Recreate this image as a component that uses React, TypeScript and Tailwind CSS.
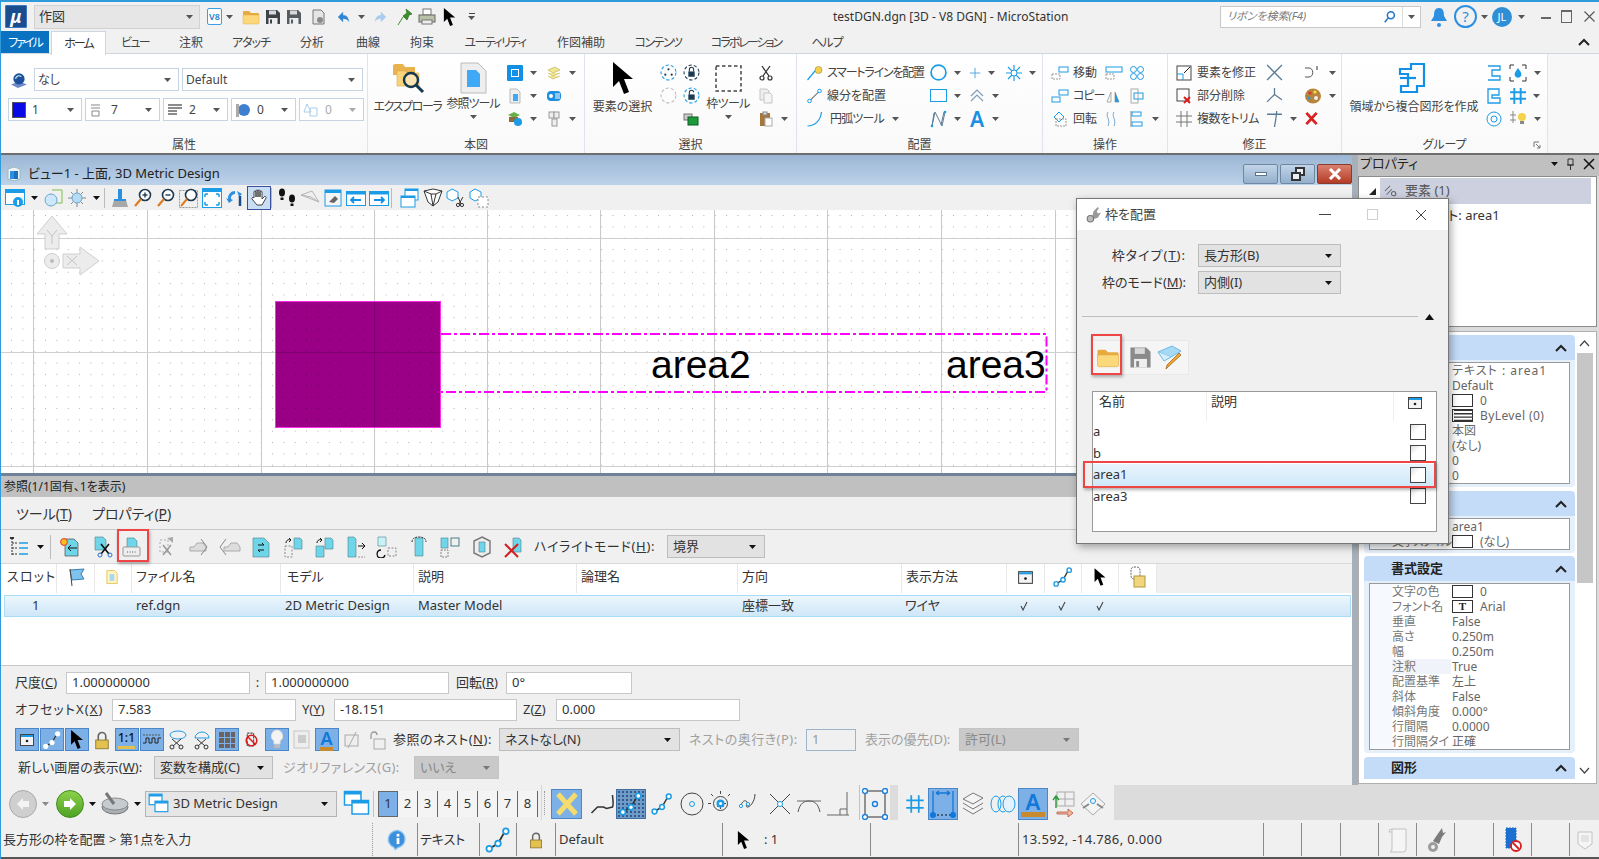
import React from "react";

const BL = "#1c9ce6";

function Ico({ w = 16, h = 16, vb = "0 0 16 16", children }: { w?: number; h?: number; vb?: string; children?: React.ReactNode }) {
  return (
    <svg width={w} height={h} viewBox={vb} fill="none" className="shrink-0">
      {children}
    </svg>
  );
}

const Caret = ({ c = "#555" }: { c?: string }) => (
  <svg width="7" height="4" viewBox="0 0 7 4" className="shrink-0">
    <path d="M0 0h7L3.5 4z" fill={c} />
  </svg>
);
const Cursor = ({ w = 12, h = 18 }: { w?: number; h?: number }) => (
  <Ico w={w} h={h} vb="0 0 22 32">
    <path d="M1 0v25l6-6 5 13 5-2-5-13h9z" fill="#000" />
  </Ico>
);
const Folder = ({ w = 18, h = 16 }: { w?: number; h?: number }) => (
  <Ico w={w} h={h} vb="0 0 18 16">
    <path d="M1 3a1 1 0 0 1 1-1h5l2 2h7a1 1 0 0 1 1 1v3H1z" fill="#e8a93f" />
    <path d="M1 6h16v8a1 1 0 0 1-1 1H2a1 1 0 0 1-1-1z" fill="#fbd879" stroke="#e2ac4c" strokeWidth=".5" />
  </Ico>
);
const Save = ({ c = "#3d4347", s = 16 }: { c?: string; s?: number }) => (
  <Ico w={s} h={s}>
    <path d="M1 1h11l3 3v11H1z" fill={c} />
    <rect x="4" y="1.5" width="7" height="4" fill="#d8d8d8" />
    <rect x="3.5" y="9" width="9" height="6" fill="#eee" />
    <rect x="5" y="10.5" width="2" height="4" fill={c} />
  </Ico>
);
const Scissors = ({ c = "#333", s = 16, hc = "#333" }: { c?: string; s?: number; hc?: string }) => (
  <Ico w={s} h={s}>
    <path d="M4 1l7 10M12 1L5 11" stroke={c} strokeWidth="1.3" />
    <circle cx="4" cy="13" r="2" stroke={hc} strokeWidth="1.2" />
    <circle cx="12" cy="13" r="2" stroke={hc} strokeWidth="1.2" />
  </Ico>
);
const Chev = () => (
  <svg width="12" height="8" viewBox="0 0 12 8" className="shrink-0">
    <path d="M1 7l5-5 5 5" stroke="#222" strokeWidth="2" fill="none" />
  </svg>
);
const Lock = ({ s = 16, d = false }: { s?: number; d?: boolean }) => (
  <Ico w={s} h={s}>
    <path d="M5 8V5a3 3 0 0 1 6 0v3" stroke={d ? "#aaa" : "#666"} strokeWidth="1.3" />
    <rect x="3" y="8" width="10" height="7" fill={d ? "#eee" : "#e3c14f"} stroke={d ? "#aaa" : "#8a7430"} strokeWidth=".7" />
  </Ico>
);
const PathIcon = ({ s = 16, c = BL }: { s?: number; c?: string }) => (
  <Ico w={s} h={s}>
    <path d="M3 13l5-3 4-7" stroke="#333" strokeWidth="1" />
    <circle cx="3" cy="13" r="1.6" fill="#fff" stroke={c} />
    <circle cx="8" cy="10" r="1.6" fill="#fff" stroke={c} />
    <circle cx="12.5" cy="3" r="1.6" fill="#fff" stroke={c} />
  </Ico>
);
const ViewWin = ({ s = 16 }: { s?: number }) => (
  <Ico w={s} h={s}>
    <rect x="1.5" y="2.5" width="13" height="11" fill="#f4f4f4" stroke="#444" />
    <rect x="2" y="3" width="12" height="2" fill={BL} />
    <circle cx="8" cy="9" r="1.3" fill="#222" />
  </Ico>
);
const Win2 = ({ s = 18 }: { s?: number }) => (
  <Ico w={s} h={s} vb="0 0 18 18">
    <rect x="1" y="1" width="11" height="9" fill="#fff" stroke={BL} />
    <rect x="1" y="1" width="11" height="2" fill={BL} />
    <rect x="6" y="7" width="11" height="9" fill="#fff" stroke={BL} />
    <rect x="6" y="7" width="11" height="2" fill={BL} />
  </Ico>
);
const Line = ({ d, c = BL, s = 16, sw = 1.2 }: { d: string; c?: string; s?: number; sw?: number }) => (
  <Ico w={s} h={s}>
    <path d={d} stroke={c} strokeWidth={sw} />
  </Ico>
);
const InfoBubble = ({ s = 16 }: { s?: number }) => (
  <Ico w={s} h={s}>
    <path d="M8 1a7 6.5 0 0 0-3 12.4L6 15l2-1.5A7 6.5 0 0 0 8 1z" fill="#3c8fdc" stroke="#8cc4f2" />
    <rect x="7" y="6.5" width="2" height="4.5" fill="#fff" />
    <rect x="7" y="3.5" width="2" height="2" fill="#fff" />
  </Ico>
);
const MagGlass = ({ sign, s = 20 }: { sign?: "+" | "-"; s?: number }) => (
  <Ico w={s} h={s} vb="0 0 20 20">
    <circle cx="12" cy="7" r="5.5" fill="#fff" stroke="#1c3b52" strokeWidth="1.6" />
    <path d="M8 11l-6 7" stroke="#e27a1f" strokeWidth="2.2" />
    {sign && <path d="M9.5 7h5" stroke="#1c3b52" strokeWidth="1.4" />}
    {sign === "+" && <path d="M12 4.5v5" stroke="#1c3b52" strokeWidth="1.4" />}
  </Ico>
);
const DashSquare = ({ s = 27 }: { s?: number }) => (
  <Ico w={s} h={s} vb="0 0 27 27">
    <rect x="1" y="1" width="25" height="25" stroke="#444" strokeWidth="1.5" strokeDasharray="3.5 2.5" />
  </Ico>
);
const RedX = ({ s = 15 }: { s?: number }) => (
  <Ico w={s} h={s}>
    <path d="M2.5 2l11 12M13.5 2l-11 12" stroke="#dc2020" strokeWidth="3" />
  </Ico>
);

function Cell({ className = "", children }: { className?: string; children?: React.ReactNode }) {
  return <div className={"flex items-center whitespace-nowrap " + className}>{children}</div>;
}

function Tool({ icon, caret }: { icon: React.ReactNode; caret?: boolean }) {
  return (
    <div className="flex items-center gap-[7px] h-[23px]">
      {icon}
      {caret && <Caret />}
    </div>
  );
}

function Group({ label, className, launcher, children }: { label: string; className: string; launcher?: boolean; children?: React.ReactNode }) {
  return (
    <div className={"relative flex flex-col border-r border-[#dfe4ea] " + className}>
      <div className="flex-1 pt-[7px]">{children}</div>
      <div className="h-[18px] leading-[20px] text-center text-[12px] text-[#444]">{label}</div>
      {launcher && (
        <div className="absolute right-[6px] bottom-[4px]">
          <Ico w={8} h={8} vb="0 0 8 8">
            <path d="M1 1h5M1 1v5M3 3l4 4M7 4v3H4" stroke="#777" />
          </Ico>
        </div>
      )}
    </div>
  );
}

function BigBtn({ icon, label, caret, className = "", textClass = "" }: { icon: React.ReactNode; label: string; caret?: boolean; className?: string; textClass?: string }) {
  return (
    <div className={"flex flex-col items-center " + className}>
      <div className="mt-[1px] h-[32px] flex items-center">{icon}</div>
      <div className={"leading-[16px] whitespace-nowrap " + (caret ? "mt-[2px] " : "mt-[5px] ") + textClass}>{label}</div>
      {caret && (
        <div className="mt-[3px]">
          <Caret />
        </div>
      )}
    </div>
  );
}

function RCombo({ w, children, disabled }: { w: string; children?: React.ReactNode; disabled?: boolean }) {
  return (
    <div className={"flex items-center justify-between h-[23px] bg-white border border-[#c5d3e3] px-[3px] " + w + (disabled ? " text-[#aaa]" : "")}>
      <div className="flex items-center gap-[6px] whitespace-nowrap">{children}</div>
      <div className="mr-[4px]">
        <Caret c={disabled ? "#aaa" : "#555"} />
      </div>
    </div>
  );
}

function TitleBar() {
  return (
    <div className="flex items-center h-[31px] bg-[#f1f1f1] border-t-2 border-[#2f9bdc]">
      <div className="ml-[4px] w-[22px] h-[23px] bg-[#1b4c8d] border border-[#3d78c4] rounded-[1px] text-white italic font-bold text-[18px] leading-[20px] text-center">μ</div>
      <div className="ml-[7px] w-[166px] h-[24px] bg-[#e6e6e6] border border-[#d2d2d2] flex items-center justify-between px-[4px] text-[13px]">
        作図
        <div className="mr-[2px]"><Caret /></div>
      </div>
      <div className="ml-[7px] w-[15px] h-[17px] border border-[#39a0e6] rounded-[2px] text-[9px] leading-[15px] text-center text-[#1c7fcb] bg-white font-semibold">V8</div>
      <div className="ml-[4px]"><Caret /></div>
      <div className="ml-[9px]"><Folder /></div>
      <div className="ml-[5px]"><Save /></div>
      <div className="ml-[5px]"><Save c="#565c60" /></div>
      <div className="ml-[8px]">
        <Ico>
          <path d="M3 1h8l3 3v11H3z" fill="#e5e5e5" stroke="#777" />
          <circle cx="10" cy="11" r="3" fill="#8a8a8a" />
        </Ico>
      </div>
      <div className="ml-[11px]">
        <Ico w={14} h={14}>
          <path d="M7 2L1 8l6 6v-4c3 0 5 1 7 4-1-6-3-8-7-8z" fill="#2f86d2" />
        </Ico>
      </div>
      <div className="ml-[7px]"><Caret /></div>
      <div className="ml-[8px]">
        <Ico w={14} h={14}>
          <path d="M9 2l6 6-6 6v-4c-3 0-5 1-7 4 1-6 3-8 7-8z" fill="#a9cdee" />
        </Ico>
      </div>
      <div className="ml-[10px]">
        <Ico w={16} h={18} vb="0 0 16 18">
          <path d="M9 1l6 5-3 1-2 5-4-4 4-3zM6 9l-5 8" fill="#3d8b2e" stroke="#3d8b2e" />
        </Ico>
      </div>
      <div className="ml-[5px]">
        <Ico w={18} h={18} vb="0 0 18 18">
          <rect x="5" y="1" width="8" height="6" fill="#fff" stroke="#777" />
          <rect x="1" y="7" width="16" height="7" fill="#b8c2a8" stroke="#666" />
          <rect x="4" y="12" width="10" height="4" fill="#eee" stroke="#777" />
        </Ico>
      </div>
      <div className="ml-[7px]"><Cursor w={13} h={18} /></div>
      <div className="ml-[12px] flex flex-col items-center gap-[2px]">
        <div className="w-[6px] h-[1px] bg-[#444]" />
        <Caret />
      </div>
      <div className="ml-[358px] w-[240px] text-[12px] text-[#333] whitespace-nowrap">testDGN.dgn [3D - V8 DGN] - MicroStation</div>
      <div className="ml-[147px] w-[201px] h-[22px] bg-white border border-[#c9c9c9] flex items-center text-[11px] italic text-[#7a7a7a]">
        <div className="flex-1 pl-[6px]">リボンを検索(F4)</div>
        <div className="w-[26px] flex justify-center border-r border-[#ddd] h-full items-center">
          <Ico w={14} h={14}>
            <circle cx="9" cy="6" r="4" stroke="#2077c9" strokeWidth="1.8" />
            <path d="M6 9l-4 5" stroke="#2077c9" strokeWidth="1.8" />
          </Ico>
        </div>
        <div className="w-[17px] flex justify-center"><Caret /></div>
      </div>
      <div className="ml-[8px]">
        <Ico w={20} h={22} vb="0 0 20 22">
          <path d="M10 2c-4 0-5 3-5 8l-3 5h16l-3-5c0-5-1-8-5-8z" fill="#2d8fe0" />
          <circle cx="10" cy="19" r="2" fill="#2d8fe0" />
        </Ico>
      </div>
      <div className="ml-[5px] w-[23px] h-[23px] rounded-full border-2 border-[#2d8fe0] text-[#2d8fe0] text-[15px] leading-[19px] text-center">?</div>
      <div className="ml-[4px]"><Caret /></div>
      <div className="ml-[4px] w-[20px] h-[20px] rounded-full bg-[#2e8fd6] text-white text-[11px] leading-[20px] text-center">JL</div>
      <div className="ml-[6px]"><Caret /></div>
      <div className="ml-[16px] w-[10px] h-[2px] bg-[#666] mt-[3px]" />
      <div className="ml-[10px] w-[11px] h-[13px] border border-[#666] border-t-2" />
      <div className="ml-[12px]">
        <Ico w={11} h={11} vb="0 0 11 11">
          <path d="M.5.5l10 10M10.5.5l-10 10" stroke="#555" strokeWidth="1.1" />
        </Ico>
      </div>
    </div>
  );
}

const tabs = [
  { t: "ビュー", c: "w-[58px] tracking-[-1.7px]" },
  { t: "注釈", c: "w-[54px]" },
  { t: "アタッチ", c: "w-[66px] tracking-[-1px]" },
  { t: "分析", c: "w-[56px]" },
  { t: "曲線", c: "w-[56px]" },
  { t: "拘束", c: "w-[52px]" },
  { t: "ユーティリティ", c: "w-[94px] tracking-[-1.6px]" },
  { t: "作図補助", c: "w-[78px]" },
  { t: "コンテンツ", c: "w-[76px] tracking-[-1.6px]" },
  { t: "コラボレーション", c: "w-[100px] tracking-[-2px]" },
  { t: "ヘルプ", c: "w-[62px] tracking-[-1px]" },
];

function TabBar() {
  return (
    <div className="flex items-stretch h-[23px] bg-[#f1f1f1] border-b border-[#cdd6e1]">
      <div className="w-[48px] bg-[#0b72c2] text-white text-center leading-[24px] text-[12px] tracking-[-2px]">ファイル</div>
      <div className="ml-[2px] w-[55px] h-[24px] bg-white border border-b-0 border-[#cdd6e1] text-center leading-[23px] text-[12px] tracking-[-2px]">ホーム</div>
      {tabs.map((tab) => (
        <div key={tab.t} className={tab.c + " text-center leading-[24px] text-[12px] text-[#444] whitespace-nowrap"}>
          {tab.t}
        </div>
      ))}
      <div className="ml-auto mr-[9px] self-center">
        <Chev />
      </div>
    </div>
  );
}

function Ribbon() {
  return (
    <div className="flex h-[101px] bg-gradient-to-b from-white to-[#f9f9f9] border-b-2 border-[#6e6e6e] text-[12px] text-[#444]">
      <Group label="属性" className="w-[367px]">
        <div className="mt-[7px] flex items-center gap-[3px] pl-[9px]">
          <div className="w-[21px]">
            <Ico w={18} h={18}>
              <path d="M1 12l6 3 8-3-7-3z" fill="#6c89c9" />
              <circle cx="8" cy="7" r="5" fill="#1e4f9c" />
              <path d="M5 7a3 3 0 0 1 5-2" stroke="#cfe" />
            </Ico>
          </div>
          <RCombo w="w-[145px]">なし</RCombo>
          <RCombo w="w-[181px]">Default</RCombo>
        </div>
        <div className="mt-[7px] flex items-center gap-[3px] pl-[7px]">
          <RCombo w="w-[74px]">
            <div className="w-[14px] h-[16px] bg-[#0a0ae6] border border-[#555]" />1
          </RCombo>
          <RCombo w="w-[75px]">
            <Ico>
              <path d="M2 3h9M2 6h9M3 9h7v5H3z" stroke="#888" />
            </Ico>
            7
          </RCombo>
          <RCombo w="w-[65px]">
            <Ico>
              <path d="M1 3h14M1 6h14M1 9h9M1 12h9" stroke="#666" strokeWidth="1.3" />
            </Ico>
            2
          </RCombo>
          <RCombo w="w-[65px]">
            <Ico>
              <circle cx="9" cy="8" r="6" fill="#3f7fd0" />
              <rect x="1" y="2" width="3" height="13" fill="#aaa" />
            </Ico>
            0
          </RCombo>
          <RCombo w="w-[65px]" disabled>
            <Ico>
              <path d="M4 2l4 8H1zM7 6h7v8H7z" stroke="#a9cdea" />
            </Ico>
            0
          </RCombo>
        </div>
      </Group>
      <Group label="本図" className="w-[217px]">
        <div className="flex">
          <BigBtn
            className="w-[80px]"
            textClass="tracking-[-1.4px]"
            label="エクスプローラ"
            icon={
              <Ico w={34} h={32} vb="0 0 34 32">
                <path d="M2 4a2 2 0 0 1 2-2h8l2 3h10v8H2z" fill="#eab24d" />
                <path d="M6 9h8l2 2h12v13H6z" fill="#f9d27c" stroke="#e0ab4c" strokeWidth=".6" />
                <circle cx="20" cy="18" r="7" fill="#fff" fillOpacity=".4" stroke="#14394f" strokeWidth="2.4" />
                <path d="M25 23l7 7" stroke="#14394f" strokeWidth="3" />
              </Ico>
            }
          />
          <BigBtn
            className="w-[52px]"
            textClass="tracking-[-1px]"
            label="参照ツール"
            caret
            icon={
              <Ico w={27} h={32} vb="0 0 27 32">
                <path d="M1 1h17l8 8v22H1z" fill="#eeeeee" stroke="#bbb" />
                <path d="M7 8h9l4 4v13H7z" fill="#3fa9f5" />
              </Ico>
            }
          />
          <div className="ml-[8px] grid grid-cols-[39px_38px] grid-rows-[23px_23px_23px]">
            <Tool caret icon={<div className="w-[16px] h-[16px] bg-[#1190e6] rounded-[1px] flex items-center justify-center"><div className="w-[8px] h-[8px] border border-white" /></div>} />
            <Tool caret icon={<Ico><path d="M2 5l7-3 5 3-7 3zM2 8l5 3 7-3M2 11l5 3 7-3" fill="#f2e68f" stroke="#b9a84f" strokeWidth=".6" /></Ico>} />
            <Tool caret icon={<Ico><path d="M3 1h7l3 3v11H3z" fill="#eee" stroke="#bbb" /><rect x="6" y="6" width="5" height="7" fill="#3fa9f5" /></Ico>} />
            <Tool icon={<Ico><rect x="1" y="3" width="14" height="10" rx="4" fill="#1c8fe0" /><circle cx="5" cy="8" r="2" fill="#fff" /><path d="M9 6h5M9 8h5M9 10h5" stroke="#fff" /></Ico>} />
            <Tool caret icon={<Ico><path d="M1 4l6-3 6 3-6 3z" fill="#69b04a" /><rect x="2" y="6" width="9" height="5" fill="#8a6d3b" /><circle cx="11" cy="11" r="4" fill={BL} /></Ico>} />
            <Tool caret icon={<Ico><rect x="3" y="1" width="5" height="6" fill="#eee" stroke="#999" /><rect x="8" y="1" width="5" height="6" fill="#eee" stroke="#999" /><rect x="6" y="8" width="5" height="7" fill="#eee" stroke="#999" /></Ico>} />
          </div>
        </div>
      </Group>
      <Group label="選択" className="w-[212px]">
        <div className="flex">
          <BigBtn className="w-[75px]" label="要素の選択" icon={<Cursor w={22} h={32} />} />
          <div className="grid grid-cols-[23px_21px] grid-rows-[23px_23px_23px]">
            <Tool icon={<Ico w={17} h={17}><circle cx="8" cy="8" r="7" stroke={BL} strokeDasharray="3 2" /><circle cx="8" cy="5" r="1" fill="#1c3b52" /><circle cx="5" cy="10" r="1" fill="#1c3b52" /><circle cx="11" cy="10" r="1" fill="#1c3b52" /></Ico>} />
            <Tool icon={<Ico w={17} h={17}><circle cx="8" cy="8" r="7" stroke="#1c3b52" strokeDasharray="3 2" /><rect x="5" y="7" width="6" height="5" fill="#1c3b52" /><path d="M6 7V5a2 2 0 0 1 4 0v2" stroke="#1c3b52" /></Ico>} />
            <Tool icon={<Ico w={17} h={17}><circle cx="8" cy="8" r="7" stroke="#bbb" strokeDasharray="3 2" /></Ico>} />
            <Tool icon={<Ico w={17} h={17}><circle cx="8" cy="8" r="7" stroke={BL} strokeDasharray="3 2" /><rect x="5" y="7" width="6" height="5" fill="#1c3b52" /><path d="M6 7V5a2 2 0 0 1 4 0" stroke="#1c3b52" /></Ico>} />
            <div />
            <Tool icon={<Ico><rect x="1" y="3" width="8" height="6" fill="#ccc" stroke="#777" /><rect x="5" y="6" width="10" height="8" fill="#1d9a3c" stroke="#0d5a20" /></Ico>} />
          </div>
          <BigBtn className="w-[48px]" textClass="tracking-[-.6px]" label="枠ツール" caret icon={<DashSquare />} />
          <div className="ml-[6px] grid grid-cols-[30px] grid-rows-[23px_23px_23px]">
            <Tool icon={<Scissors />} />
            <Tool icon={<Ico><path d="M2 1h7l2 2v9H2z" fill="#eee" stroke="#c5c5c5" /><path d="M6 5h6l2 2v8H6z" fill="#f5f5f5" stroke="#c5c5c5" /></Ico>} />
            <Tool caret icon={<Ico><rect x="2" y="2" width="10" height="13" fill="#a5773c" /><rect x="5" y="1" width="4" height="3" fill="#ddd" stroke="#888" /><rect x="7" y="7" width="7" height="8" fill="#fff" stroke="#aaa" /></Ico>} />
          </div>
        </div>
      </Group>
      <Group label="配置" className="w-[246px]">
        <div className="ml-[9px] grid grid-cols-[124px_39px_37px_37px] grid-rows-[23px_23px_23px]">
          <Cell className="gap-[4px]">
            <Ico w={17} h={16}>
              <path d="M1 15L11 3" stroke={BL} strokeWidth="1.2" />
              <circle cx="12" cy="5" r="3.5" fill="#f5d24a" stroke="#9a8530" strokeWidth=".6" />
            </Ico>
            <span className="tracking-[-1.2px]">スマートラインを配置</span>
          </Cell>
          <Tool caret icon={<Ico w={17} h={17}><circle cx="8" cy="8" r="7" stroke={BL} strokeWidth="1.6" /></Ico>} />
          <Tool caret icon={<Line s={12} d="M8 1v14M1 8h14" c="#4da3de" />} />
          <Tool caret icon={<Ico><path d="M8 0v16M0 8h16M2 2l12 12M14 2L2 14" stroke={BL} strokeWidth="1.2" /><circle cx="8" cy="8" r="3" fill="#fff" stroke={BL} /></Ico>} />
          <Cell className="gap-[4px]">
            <Ico w={17} h={16}>
              <path d="M3 13L13 3" stroke="#333" />
              <circle cx="3" cy="13" r="1.8" fill="#fff" stroke={BL} />
              <circle cx="13" cy="3" r="1.8" fill="#fff" stroke={BL} />
            </Ico>
            線分を配置
          </Cell>
          <Tool caret icon={<Ico w={17} h={13} vb="0 0 17 13"><rect x=".5" y=".5" width="16" height="12" stroke={BL} /></Ico>} />
          <Tool caret icon={<Ico><path d="M2 8l6-6 6 6M2 13l6-6 6 6" stroke="#7c9eb8" strokeWidth="1.2" /></Ico>} />
          <div />
          <Cell className="gap-[7px]">
            <Ico w={17} h={16}>
              <path d="M1 15c7 0 13-5 14-14" stroke={BL} strokeWidth="1.2" />
            </Ico>
            <div className="flex items-center gap-[8px]">
              <span className="tracking-[-.8px]">円弧ツール</span>
              <Caret />
            </div>
          </Cell>
          <Tool caret icon={<Ico w={17} h={18} vb="0 0 17 18"><path d="M2 16L5 2l7 14 3-14M2 16L4 3M11 15l3-13" stroke="#5a7b96" strokeWidth="1" /><circle cx="2" cy="16" r="1.3" fill={BL} /><circle cx="15" cy="2" r="1.3" fill={BL} /></Ico>} />
          <Tool caret icon={<div className="w-[16px] text-[#1a8fe0] text-[21px] leading-[20px] font-semibold text-center">A</div>} />
        </div>
      </Group>
      <Group label="操作" className="w-[125px]">
        <div className="ml-[8px] grid grid-cols-[54px_24px_30px] grid-rows-[23px_23px_23px]">
          <Cell className="gap-[4px]">
            <Ico w={18} h={14} vb="0 0 18 14"><rect x="1" y="8" width="8" height="5" stroke="#999" strokeDasharray="2 1" /><rect x="8" y="1" width="9" height="5" stroke={BL} /></Ico>
            移動
          </Cell>
          <Tool icon={<Ico w={18} h={14} vb="0 0 18 14"><rect x="1" y="1" width="16" height="5" stroke={BL} /><rect x="1" y="8" width="8" height="5" stroke="#999" strokeDasharray="2 1" /></Ico>} />
          <Tool icon={<Ico><circle cx="4.5" cy="4.5" r="3" stroke={BL} /><circle cx="11.5" cy="4.5" r="3" stroke={BL} /><circle cx="4.5" cy="11.5" r="3" stroke={BL} /><circle cx="11.5" cy="11.5" r="3" stroke={BL} /></Ico>} />
          <Cell className="gap-[4px]">
            <Ico w={18} h={14} vb="0 0 18 14"><rect x="1" y="8" width="8" height="5" stroke={BL} /><rect x="8" y="1" width="9" height="5" stroke={BL} /></Ico>
            <span className="tracking-[-1px]">コピー</span>
          </Cell>
          <Tool icon={<Ico><path d="M2 14l4-10v10zM14 14l-4-10v10z" stroke="#aaa" /><path d="M10 14V4l4 10z" fill={BL} /></Ico>} />
          <Tool icon={<Ico><rect x="2" y="1" width="7" height="14" stroke="#aaa" /><rect x="5" y="5" width="9" height="6" stroke={BL} /></Ico>} />
          <Cell className="gap-[4px]">
            <Ico w={18} h={16}><path d="M2 6l5-5 5 5-5 5z" stroke={BL} /><rect x="4" y="8" width="10" height="7" stroke="#999" strokeDasharray="2 1" /></Ico>
            回転
          </Cell>
          <Tool icon={<Ico w={12} h={16} vb="0 0 12 16"><path d="M3 1c-3 4 3 8 0 14M9 1c-3 4 3 8 0 14" stroke="#7aa9cc" /></Ico>} />
          <Tool caret icon={<Ico><rect x="3" y="1" width="9" height="4" stroke={BL} /><rect x="3" y="11" width="10" height="4" stroke={BL} /><path d="M2 0v16" stroke="#888" /></Ico>} />
        </div>
      </Group>
      <Group label="修正" className="w-[174px]">
        <div className="ml-[8px] grid grid-cols-[90px_38px_38px] grid-rows-[23px_23px_23px]">
          <Cell className="gap-[5px]">
            <Ico><rect x="1" y="1" width="14" height="14" stroke="#444" /><path d="M1 9h6v6" stroke={BL} /><path d="M8 8l6-6" stroke="#222" /></Ico>
            要素を修正
          </Cell>
          <Tool icon={<Line s={17} d="M1 1l14 14M15 1L1 15" c="#5a7b96" />} />
          <Tool caret icon={<Ico w={18} h={16} vb="0 0 18 16"><path d="M1 3h4c5 0 5 9 0 9H1" stroke="#555" /><path d="M13 1v4" stroke="#333" /></Ico>} />
          <Cell className="gap-[5px]">
            <Ico>
              <rect x="1" y="1" width="12" height="12" stroke="#444" />
              <path d="M8 9l6 6M14 9l-6 6" stroke="#dc2020" strokeWidth="2" />
            </Ico>
            部分削除
          </Cell>
          <Tool icon={<Line s={17} d="M8 1v6l-7 7M8 7l7 5" c="#5a7b96" />} />
          <Tool caret icon={<Ico w={18} h={18} vb="0 0 18 18"><ellipse cx="9" cy="9" rx="8" ry="7.5" fill="#b6843c" /><circle cx="6" cy="6" r="1.6" fill="#d33" /><circle cx="11" cy="5" r="1.6" fill="#fd3" /><circle cx="5" cy="11" r="1.6" fill="#39c" /><circle cx="12" cy="11" r="2" fill="#eee" /></Ico>} />
          <Cell className="gap-[5px]">
            <Line d="M5 0v16M11 0v16M0 5h16M0 11h16" c="#777" sw={1} />
            <span className="tracking-[-.6px]">複数をトリム</span>
          </Cell>
          <Tool caret icon={<Line s={17} d="M1 4h14M10 1c0 5-1 8-2 15" c="#5a7b96" />} />
          <Tool icon={<RedX />} />
        </div>
      </Group>
      <Group label="グループ" className="w-[206px]" launcher>
        <div className="flex">
          <BigBtn
            className="w-[145px]"
            label="領域から複合図形を作成"
            icon={
              <div className="-ml-[4px]">
                <Ico w={28} h={32} vb="0 0 28 32">
                  <path d="M13 2h13v22h-7v6H3v-6h7V12H2V7h11z" stroke="#1190e6" strokeWidth="2.2" />
                  <path d="M2 16h16" stroke="#1190e6" strokeWidth="2.2" />
                </Ico>
              </div>
            }
          />
          <div className="grid grid-cols-[23px_38px] grid-rows-[23px_23px_23px]">
            <Tool icon={<Line d="M2 1h12v4H6v6h8v4H2" sw={1.3} />} />
            <Tool caret icon={<Ico w={18} h={18} vb="0 0 18 18"><path d="M1 5V1h4M13 1h4v4M17 13v4h-4M5 17H1v-4" stroke="#333" /><path d="M9 4c-3 4-4 6-3 8a3.5 3.5 0 0 0 6 0c1-2 0-4-3-8z" fill={BL} /></Ico>} />
            <Tool icon={<Line d="M2 1h11v6h-7v3h8v5H2z" sw={1.3} />} />
            <Tool caret icon={<Line s={17} d="M1 5h15M1 11h15M5 1v15M11 1v15" sw={1.8} />} />
            <Tool icon={<Ico><circle cx="8" cy="8" r="7" stroke={BL} /><circle cx="8" cy="8" r="3" stroke={BL} /></Ico>} />
            <Tool caret icon={<Ico w={18} h={18} vb="0 0 18 18"><path d="M4 1v12M1 5h6M1 10h6" stroke="#888" /><circle cx="13" cy="7" r="4" fill="#f5d24a" /><rect x="11" y="11" width="4" height="3" fill="#888" /></Ico>} />
          </div>
        </div>
      </Group>
      <div className="flex-1 bg-[#f7f7f7]" />
    </div>
  );
}

function Canvas() {
  const vx = [32, 146, 260, 373, 486, 599, 713, 826, 940, 1054, 1167, 1281];
  const hy = [28, 142, 256];
  return (
    <div className="relative h-[263px] bg-white overflow-hidden">
      <svg width="1351" height="263" className="block">
        <defs>
          <pattern id="d1" x="10" y="5" width="11.35" height="11.35" patternUnits="userSpaceOnUse">
            <rect width="1" height="1" fill="#b0b0b0" />
          </pattern>
          <pattern id="d2" x="10" y="5" width="11.35" height="11.35" patternUnits="userSpaceOnUse">
            <rect width="1" height="1" fill="#5c0050" />
          </pattern>
        </defs>
        <rect width="1351" height="263" fill="url(#d1)" />
        {vx.map((x) => (
          <line key={x} x1={x + 0.5} y1="0" x2={x + 0.5} y2="263" stroke="#c9c9c9" />
        ))}
        {hy.map((y) => (
          <line key={y} x1="0" y1={y + 0.5} x2="1351" y2={y + 0.5} stroke="#cfcfcf" />
        ))}
        <rect x="274.5" y="91.5" width="165" height="126" fill="#9a0085" stroke="#ff2cf0" />
        <rect x="275" y="92" width="164" height="125" fill="url(#d2)" />
        <line x1="373.5" y1="92" x2="373.5" y2="217" stroke="#7d006c" />
        <line x1="275" y1="142.5" x2="439" y2="142.5" stroke="#7d006c" />
        <path d="M440 124H1045.5V182H440" stroke="#ff00ff" strokeWidth="2" strokeDasharray="10 3 3 3" fill="none" />
        <path d="M51 6L66 24H58V39H44V24H36z" fill="#ececec" stroke="#cfcfcf" />
        <circle cx="51" cy="51" r="7.5" fill="#ececec" stroke="#cfcfcf" />
        <circle cx="51" cy="51" r="2" fill="#bbb" />
        <path d="M62 44H79V37L98 51L79 65V58H62z" fill="#ececec" stroke="#cfcfcf" />
        <path d="M46 20l5 6 5-6M51 26v8" stroke="#c4c4c4" fill="none" />
        <path d="M66 46l10 9M76 46l-10 9" stroke="#c4c4c4" fill="none" />
      </svg>
      <div className="absolute left-[650px] top-[135px] text-[39px] leading-[39px] text-black [font-family:'Liberation_Sans',sans-serif]">area2</div>
      <div className="absolute left-[945px] top-[135px] text-[39px] leading-[39px] text-black [font-family:'Liberation_Sans',sans-serif]">area3</div>
    </div>
  );
}

function WinBtn({ red, children }: { red?: boolean; children?: React.ReactNode }) {
  return (
    <div className={"w-[35px] h-[20px] border rounded-[2px] flex items-center justify-center " + (red ? "bg-gradient-to-b from-[#d9806f] to-[#b43a24] border-[#8a3a2e]" : "bg-gradient-to-b from-[#c2d4e8] to-[#94b0cd] border-[#6e87a3]")}>
      {children}
    </div>
  );
}

function VT({ className = "w-[23px]", children }: { className?: string; children?: React.ReactNode }) {
  return <div className={"flex justify-center items-center h-[24px] shrink-0 " + className}>{children}</div>;
}

function ViewWindow() {
  return (
    <div className="flex flex-col">
      <div className="flex items-center h-[30px] bg-gradient-to-b from-[#9bb6d4] to-[#bdd2ea] pl-[5px] pt-[7px]">
        <Ico>
          <path d="M2 3l6-2 6 2v10l-6 2-6-2z" fill="#eef3f8" stroke="#9bb" />
          <path d="M4 5h4v8H4z" fill="#2d8fe0" />
          <path d="M8 5h4v8H8z" fill="#1b6fbf" />
        </Ico>
        <div className="ml-[6px] text-[13px] text-[#222]">ビュー1 - 上面, 3D Metric Design</div>
        <div className="ml-auto flex gap-[2px]">
          <WinBtn><div className="w-[12px] h-[4px] bg-white border border-[#5b7590]" /></WinBtn>
          <WinBtn><div className="relative w-[14px] h-[14px]"><div className="absolute right-0 top-0 w-[10px] h-[9px] border-2 border-[#333] bg-[#e8eef5]" /><div className="absolute left-0 bottom-0 w-[10px] h-[9px] border-2 border-[#333] bg-[#e8eef5]" /></div></WinBtn>
          <WinBtn red>
            <Ico w={14} h={12} vb="0 0 14 12"><path d="M2 1l10 10M12 1L2 11" stroke="#fff" strokeWidth="3" /></Ico>
          </WinBtn>
        </div>
      </div>
      <div className="flex items-center h-[25px] bg-[#f0f0f0]">
        <div className="w-[3px]" />
        <VT className="w-[22px]">
          <Ico w={21} h={21} vb="0 0 21 21">
            <rect x=".5" y="2.5" width="19" height="15" fill="#fff" stroke={BL} />
            <rect x="1" y="3" width="18" height="3" fill={BL} />
            <circle cx="13" cy="15" r="5" fill={BL} />
            <rect x="12" y="13" width="2" height="5" fill="#fff" />
          </Ico>
        </VT>
        <VT className="w-[16px]"><Caret c="#111" /></VT>
        <VT className="w-[24px]">
          <Ico w={20} h={20} vb="0 0 20 20"><path d="M8 2h10v13H10" stroke="#7abf4a" /><circle cx="7" cy="12" r="6" fill="#cde8fb" stroke="#6aa5d1" /></Ico>
        </VT>
        <VT className="w-[22px]">
          <Ico w={20} h={20} vb="0 0 20 20"><path d="M10 1v18M1 10h18M4 4l12 12M16 4L4 16" stroke="#888" /><circle cx="10" cy="10" r="5" fill="#b5dcf3" stroke="#6aa5d1" /></Ico>
        </VT>
        <VT className="w-[16px]"><Caret c="#111" /></VT>
        <div className="w-px h-[20px] bg-[#bbb]" />
        <div className="w-[3px]" />
        <VT>
          <Ico w={20} h={20} vb="0 0 20 20"><rect x="8" y="1" width="4" height="10" fill="#2d8fe0" /><path d="M4 12h12l2 7H2z" fill="#a8a8a8" /><rect x="4" y="11" width="12" height="2" fill="#2d8fe0" /></Ico>
        </VT>
        <VT><MagGlass sign="+" /></VT>
        <VT><MagGlass sign="-" /></VT>
        <VT>
          <Ico w={20} h={20} vb="0 0 20 20"><rect x=".5" y="2.5" width="18" height="17" stroke="#999" strokeDasharray="2 1" /><circle cx="12" cy="7" r="5.5" fill="#fff" stroke="#1c3b52" strokeWidth="1.6" /><path d="M8 11l-6 7" stroke="#e27a1f" strokeWidth="2" /></Ico>
        </VT>
        <VT>
          <Ico w={20} h={20} vb="0 0 20 20"><rect x=".5" y=".5" width="19" height="19" fill="#fff" stroke={BL} /><rect x="1" y="1" width="18" height="3" fill={BL} /><path d="M3 6v3M3 6h3M17 6v3M17 6h-3M3 17v-3M3 17h3M17 17v-3M17 17h-3" stroke={BL} strokeWidth="1.5" /></Ico>
        </VT>
        <VT>
          <Ico w={20} h={20} vb="0 0 20 20"><path d="M10 3a7 7 0 0 0-7 8l-2-1 3 5 4-3-2-1a4 4 0 0 1 4-5zM12 3l5 3-3 3z" fill="#2d8fe0" /><path d="M15 8v10" stroke="#1b4c8d" strokeWidth="2.5" /></Ico>
        </VT>
        <div className="ml-[1px] flex justify-center items-center w-[24px] h-[24px] bg-[#c8def5] border border-[#3b4f9c] shrink-0">
          <Ico w={20} h={20} vb="0 0 20 20"><path d="M5 10V4a1 1 0 0 1 2 0v5V3a1 1 0 0 1 2 0v6V3a1 1 0 0 1 2 0v6V4a1 1 0 0 1 2 0v7l2-2a1 1 0 0 1 2 1l-4 7H8L3 11a1 1 0 0 1 2-1z" fill="#fff" stroke="#333" strokeWidth=".9" /></Ico>
        </div>
        <div className="w-px h-[20px] bg-[#bbb]" />
        <div className="w-[3px]" />
        <VT>
          <Ico w={20} h={20} vb="0 0 20 20"><ellipse cx="5" cy="4.5" rx="3" ry="4" fill="#111" /><rect x="3.5" y="9.5" width="3" height="2.5" fill="#111" /><ellipse cx="15" cy="10.5" rx="3" ry="4" fill="#111" /><rect x="13.5" y="15.5" width="3" height="2.5" fill="#111" /></Ico>
        </VT>
        <VT>
          <Ico w={20} h={20} vb="0 0 20 20"><path d="M1 7l18 7-7-11z" fill="#f0f0f0" stroke="#b5b5b5" /><path d="M1 7l10 2 8 5" stroke="#b5b5b5" /></Ico>
        </VT>
        <VT>
          <Ico w={20} h={20} vb="0 0 20 20"><rect x="2" y="2" width="16" height="16" fill="#f5f5f5" stroke={BL} /><rect x="2" y="2" width="16" height="3" fill={BL} /><path d="M6 14l6-6 3 3-4 4z" fill="#666" /></Ico>
        </VT>
        <VT>
          <Ico w={20} h={20} vb="0 0 20 20"><rect x=".5" y="3.5" width="19" height="14" fill="#fff" stroke={BL} /><rect x="1" y="4" width="18" height="2.5" fill={BL} /><path d="M15 12H5M8 9l-3 3 3 3" stroke="#1190e6" strokeWidth="1.8" /></Ico>
        </VT>
        <VT>
          <Ico w={20} h={20} vb="0 0 20 20"><rect x=".5" y="3.5" width="19" height="14" fill="#fff" stroke={BL} /><rect x="1" y="4" width="18" height="2.5" fill={BL} /><path d="M5 12h10M12 9l3 3-3 3" stroke="#1190e6" strokeWidth="1.8" /></Ico>
        </VT>
        <div className="ml-[1px] w-px h-[20px] bg-[#bbb]" />
        <div className="w-[6px]" />
        <VT>
          <Ico w={20} h={20} vb="0 0 20 20"><rect x="5" y="1" width="13" height="11" fill="#fff" stroke={BL} /><rect x="5" y="1" width="13" height="2" fill={BL} /><rect x="1" y="8" width="14" height="11" fill="#fff" stroke={BL} /><rect x="1" y="8" width="14" height="2" fill={BL} /></Ico>
        </VT>
        <VT>
          <Ico w={20} h={20} vb="0 0 20 20"><path d="M1 3l9-2 9 2-4 11-5 4-5-4z" fill="#fff" stroke="#333" /><path d="M1 3l7 3h5l6-3M8 6l2 12M13 6l-3 12" stroke="#333" /></Ico>
        </VT>
        <VT>
          <Ico w={20} h={20} vb="0 0 20 20"><path d="M6 1l6 3v6l-6 3-5-3V4z" fill="#fff" stroke={BL} /><path d="M12 9l3 7M17 9l-4 7" stroke="#333" /><circle cx="12" cy="17" r="1.6" stroke="#333" /><circle cx="16" cy="17" r="1.6" stroke="#333" /></Ico>
        </VT>
        <VT>
          <Ico w={20} h={20} vb="0 0 20 20"><path d="M6 1l6 3v6l-6 3-5-3V4z" fill="#fff" stroke={BL} /><rect x="9" y="9" width="10" height="10" fill="#fff" stroke="#888" strokeDasharray="2 2" /></Ico>
        </VT>
      </div>
      <Canvas />
    </div>
  );
}

function HCell({ className, children }: { className: string; children?: React.ReactNode }) {
  return <div className={"flex items-center h-full pb-[3px] bg-white border-r border-[#e8e8e8] shrink-0 whitespace-nowrap " + className}>{children}</div>;
}

function Field({ className, children, dis }: { className: string; children?: React.ReactNode; dis?: boolean }) {
  return <div className={"h-[22px] border shrink-0 flex items-center pl-[5px] text-[13px] " + (dis ? "border-[#9db4c9] bg-[#f0f0f0] text-[#999] " : "border-[#c8c8c8] bg-white text-[#333] ") + className}>{children}</div>;
}

function Sel({ className, children, dis }: { className: string; children?: React.ReactNode; dis?: boolean }) {
  return (
    <div className={"h-[23px] border shrink-0 flex items-center justify-between px-[5px] text-[13px] " + (dis ? "bg-[#c9c9c9] border-[#c4c4c4] text-[#888] " : "bg-[#e2e2e2] border-[#bdbdbd] text-[#333] ") + className}>
      {children}
      <div className="mr-[3px]"><Caret c={dis ? "#777" : "#111"} /></div>
    </div>
  );
}

function Sq({ on, children }: { on?: boolean; children?: React.ReactNode }) {
  return (
    <div className="w-[25px] h-[23px] shrink-0 flex justify-center items-center">
      <div className={"w-[24px] h-[23px] flex items-center justify-center border " + (on ? "bg-[#7cb0e6] border-[#4a86c8]" : "border-transparent")}>{children}</div>
    </div>
  );
}

const RT = ({ children }: { children?: React.ReactNode }) => <div className="w-[31.5px] shrink-0 flex justify-center">{children}</div>;

function RefDialogPanel() {
  return (
    <div className="flex-1 flex flex-col min-h-0">
      <div className="h-[3px] bg-[#6f8297]" />
      <div className="h-[21px] bg-[#c0c0c0] pl-[3px] leading-[21px] text-[12px] text-[#222]">参照(1/1固有、1を表示)</div>
      <div className="h-[33px] bg-[#f0f0f0] border-b border-[#c8c8c8] flex items-center gap-[20px] pl-[15px] text-[14px]">
        <div>ツール(<span className="underline">T</span>)</div>
        <div>プロパティ(<span className="underline">P</span>)</div>
      </div>
      <div className="relative h-[34px] bg-[#f0f0f0] flex items-center border-b border-[#d8d8d8]">
        <div className="ml-[8px]">
          <Ico w={20} h={22} vb="0 0 20 22">
            <path d="M3 2v18M3 7h5M3 12h5M3 18h5" stroke="#333" strokeDasharray="2 1" />
            <path d="M10 7h9M10 12h9M10 18h9" stroke={BL} strokeWidth="1.6" />
            <rect x="1" y="1" width="4" height="2" fill="#333" />
          </Ico>
        </div>
        <div className="ml-[8px]"><Caret c="#111" /></div>
        <div className="ml-[6px] w-px h-[24px] bg-[#bbb]" />
        <div className="ml-[5px] w-[27px] flex justify-center">
          <Ico w={22} h={22} vb="0 0 22 22"><path d="M6 3h9l4 4v13H6z" fill="#6fd6ea" stroke="#333" strokeWidth=".6" /><circle cx="5" cy="6" r="3.4" fill="#f2c21a" stroke="#e33" /><path d="M18 12H9M12 9l-3 3 3 3" stroke="#111" /></Ico>
        </div>
        <div className="ml-[4px] w-[32px] flex justify-center">
          <Ico w={20} h={22} vb="0 0 20 22"><path d="M2 1h8l3 3v10H2z" fill="#6fd6ea" stroke="#4a7f8c" strokeWidth=".6" /><path d="M8 8l8 10M16 8L8 18" stroke="#111" strokeWidth="1.6" /><circle cx="7" cy="19" r="2" stroke="#2d6fd0" /><circle cx="17" cy="19" r="2" stroke="#2d6fd0" /></Ico>
        </div>
        <div className="w-[25px] flex justify-center">
          <Ico w={19} h={20} vb="0 0 19 20"><path d="M5 1h7l3 3v7H5z" fill="#6fd6ea" stroke="#4a7f8c" strokeWidth=".6" /><rect x="1" y="10" width="17" height="9" rx="1" fill="#eee" stroke="#999" /><path d="M5 15h9" stroke="#555" strokeDasharray="1 1.5" /></Ico>
        </div>
        <div className="w-[7px]" />
        <RT><Ico w={20} h={22} vb="0 0 20 22"><path d="M3 4h8v12H3z" stroke="#aaa" strokeDasharray="2 2" /><path d="M6 9l8 10M14 9L6 19" stroke="#999" strokeWidth="1.5" /><path d="M10 2l6-1v6z" fill="#aaa" /></Ico></RT>
        <RT><Ico w={22} h={22} vb="0 0 22 22"><path d="M3 11h4l3-4h6l3 4v4H3z" fill="#ddd" stroke="#aaa" /><path d="M14 3l6 8-6 8" stroke="#888" /></Ico></RT>
        <RT><Ico w={22} h={22} vb="0 0 22 22"><path d="M5 11h4l3-4h6l3 4v4H5z" fill="#ddd" stroke="#aaa" /><path d="M7 3L1 11l6 8" stroke="#888" /></Ico></RT>
        <RT><Ico w={20} h={22} vb="0 0 20 22"><path d="M2 2h11l5 5v14H2z" fill="#6fd6ea" stroke="#4a7f8c" strokeWidth=".6" /><path d="M7 9h6l-2-2M13 14H7l2 2" stroke="#111" /></Ico></RT>
        {[0, 1].map((i) => (
          <RT key={i}><Ico w={20} h={22} vb="0 0 20 22">{i === 0 && <rect x="2" y="10" width="7" height="11" stroke="#888" strokeDasharray="2 1.5" />}{i === 1 && <path d="M2 10h8v11H2z" fill="#6fd6ea" stroke="#4a7f8c" strokeWidth=".6" />}<path d="M11 2h6l2 2v9h-8z" fill="#6fd6ea" stroke="#4a7f8c" strokeWidth=".6" /><path d="M3 7c0-3 3-4 5-3M6 2l2 2-2 2" stroke="#111" /></Ico></RT>
        ))}
        <RT><Ico w={20} h={22} vb="0 0 20 22"><path d="M2 1h6l2 2v18H2z" fill="#6fd6ea" stroke="#4a7f8c" strokeWidth=".6" /><path d="M12 10h7M16 7l3 3-3 3" stroke="#111" /><path d="M12 21h7" stroke="#999" strokeDasharray="2 1" /></Ico></RT>
        <RT><Ico w={22} h={22} vb="0 0 22 22"><path d="M2 1h8v9H2z" fill="#c8f2f8" stroke="#4a7f8c" strokeWidth=".6" /><rect x="12" y="12" width="8" height="8" stroke="#888" strokeDasharray="2 1.5" /><path d="M5 14a4 4 0 1 0 4 5" stroke="#111" strokeWidth="1.3" /></Ico></RT>
        <RT><Ico w={20} h={22} vb="0 0 20 22"><path d="M6 2h8v18H6z" fill="#6fd6ea" stroke="#4a7f8c" strokeWidth=".6" /><path d="M3 6c0-3 2-5 7-5s7 2 7 5" stroke="#333" strokeDasharray="2 1" /></Ico></RT>
        <RT><Ico w={22} h={22} vb="0 0 22 22"><rect x="2" y="2" width="7" height="10" fill="#6fd6ea" stroke="#4a7f8c" strokeWidth=".6" /><rect x="12" y="2" width="8" height="8" stroke="#4a7f8c" /><rect x="2" y="14" width="7" height="7" stroke="#888" strokeDasharray="2 1" /></Ico></RT>
        <RT><Ico w={20} h={22} vb="0 0 20 22"><path d="M10 1l8 4v12l-8 4-8-4V5z" fill="#eee" stroke="#777" strokeWidth="1.4" /><path d="M7 6h6v10H7z" fill="#6fd6ea" stroke="#4a7f8c" strokeWidth=".6" /></Ico></RT>
        <RT><Ico w={20} h={22} vb="0 0 20 22"><path d="M10 2h6l2 2v12h-8z" fill="#6fd6ea" stroke="#4a7f8c" strokeWidth=".6" /><path d="M2 8l13 13M15 8L2 21" stroke="#d31f1f" strokeWidth="2" /></Ico></RT>
        <div className="ml-[5px] w-[128px] text-[13px] whitespace-nowrap tracking-[.7px]">ハイライトモード(<span className="underline">H</span>):</div>
        <Sel className="ml-[5px] w-[98px]">境界</Sel>
        <div className="absolute left-[116px] top-[-1px] w-[32px] h-[33px] border-2 border-[#f04545] shadow-[1px_2px_3px_rgba(0,0,0,0.3)]" />
      </div>
      <div className="flex items-center h-[29px] bg-[#f0f0f0] text-[13px] text-[#333]">
        <HCell className="w-[56px] pl-[6px] tracking-[1.2px]">スロット</HCell>
        <HCell className="w-[38px] pl-[10px]">
          <Ico w={18} h={20} vb="0 0 18 20"><path d="M3 3l14-1-3 5 3 5-12 1z" fill="#7ec2ed" stroke="#3a7fb0" /><path d="M3 2l2 17" stroke="#444" /></Ico>
        </HCell>
        <HCell className="w-[37px] pl-[10px]">
          <Ico w={15} h={16}><path d="M2 1h8l3 3v11H2z" fill="#fff3c4" stroke="#e2c75c" /><path d="M5 5h5v7H5z" fill="#a8d8ef" /></Ico>
        </HCell>
        <HCell className="w-[149px] pl-[4px] tracking-[.4px]">ファイル名</HCell>
        <HCell className="w-[133px] pl-[6px]">モデル</HCell>
        <HCell className="w-[163px] pl-[4px]">説明</HCell>
        <HCell className="w-[161px] pl-[4px]">論理名</HCell>
        <HCell className="w-[164px] pl-[4px]">方向</HCell>
        <HCell className="w-[105px] pl-[4px]">表示方法</HCell>
        <HCell className="w-[38px] justify-center"><ViewWin s={17} /></HCell>
        <HCell className="w-[37px] justify-center"><PathIcon s={22} /></HCell>
        <HCell className="w-[37px] justify-center"><Cursor /></HCell>
        <HCell className="w-[38px] justify-center">
          <Ico w={19} h={22} vb="0 0 19 22"><rect x="3" y="1" width="9" height="12" rx="3" stroke="#666" strokeDasharray="2 1" /><rect x="6" y="10" width="11" height="11" fill="#f1d67f" stroke="#b0983f" /></Ico>
        </HCell>
      </div>
      <div className="h-[73px] bg-white pt-[2px] pl-[3px] border-b border-[#c8c8c8]">
        <div className="flex items-center h-[22px] w-[1347px] border border-[#a9daf6] bg-gradient-to-b from-[#ecf6fd] to-[#cfe7f8] text-[13px] text-[#333]">
          <div className="w-[131px] pl-[27px]">1</div>
          <div className="w-[149px]">ref.dgn</div>
          <div className="w-[133px]">2D Metric Design</div>
          <div className="w-[324px]">Master Model</div>
          <div className="w-[163px]">座標一致</div>
          <div className="w-[102px]">ワイヤ</div>
          {[0, 1, 2].map((i) => (
            <div key={i} className="w-[38px] pl-[12px]">
              <Ico w={10} h={10} vb="0 0 10 10"><path d="M2 5l2 4 4-8" stroke="#444" strokeWidth="1.1" /></Ico>
            </div>
          ))}
        </div>
      </div>
      <div className="flex-1 bg-[#f0f0f0] pl-[14px] pt-[6px] text-[13px] text-[#333] relative">
        <div className="flex items-center h-[22px]">
          <div className="w-[51px]">尺度(<span className="underline">C</span>)</div>
          <Field className="w-[184px]">1.000000000</Field>
          <div className="w-[15px] text-center">:</div>
          <Field className="w-[184px]">1.000000000</Field>
          <div className="ml-[7px] w-[50px]">回転(<span className="underline">R</span>)</div>
          <Field className="w-[126px]">0°</Field>
        </div>
        <div className="flex items-center h-[22px] mt-[5px]">
          <div className="w-[97px] whitespace-nowrap tracking-[1.1px]">オフセットX(<span className="underline">X</span>)</div>
          <Field className="w-[184px]">7.583</Field>
          <div className="ml-[6px] w-[32px]">Y(<span className="underline">Y</span>)</div>
          <Field className="w-[183px]">-18.151</Field>
          <div className="ml-[6px] w-[33px]">Z(<span className="underline">Z</span>)</div>
          <Field className="w-[184px]">0.000</Field>
        </div>
        <div className="flex items-center h-[23px] mt-[7px] -ml-[1px]">
          <Sq on><ViewWin /></Sq>
          <Sq on><PathIcon s={20} c="#fff" /></Sq>
          <Sq on><Cursor w={14} h={19} /></Sq>
          <Sq><Lock s={20} /></Sq>
          <Sq on><div className="text-[12px] leading-[16px] text-[#111] font-medium border-b-[3px] border-[#e3c14f]">1:1</div></Sq>
          <Sq on><Ico w={20} h={18} vb="0 0 20 18"><path d="M1 12h3V7h3v5h3V7h3v5h3V7h3" stroke="#222" /><path d="M1 4h18" stroke="#555" strokeDasharray="2 1" /></Ico></Sq>
          <Sq><Ico w={20} h={20} vb="0 0 20 20"><ellipse cx="11" cy="5" rx="8" ry="4" stroke={BL} /><path d="M5 9l8 7M14 9l-8 7" stroke="#333" /><circle cx="5" cy="17" r="2" stroke="#333" /><circle cx="14" cy="17" r="2" stroke="#333" /></Ico></Sq>
          <Sq><Ico w={20} h={20} vb="0 0 20 20"><path d="M3 8a7 6 0 0 1 14 0z" stroke={BL} /><path d="M5 9l8 7M14 9l-8 7" stroke="#333" /><circle cx="5" cy="17" r="2" stroke="#333" /><circle cx="14" cy="17" r="2" stroke="#333" /></Ico></Sq>
          <Sq on><Ico w={18} h={18} vb="0 0 18 18"><path d="M1 1h5v5H1zM7 1h5v5H7zM13 1h4v5h-4zM1 7h5v5H1zM7 7h5v5H7zM13 7h4v5h-4zM1 13h5v4H1zM7 13h5v4H7zM13 13h4v4h-4z" fill="#6b6260" /></Ico></Sq>
          <Sq><Ico w={17} h={17}><path d="M4 2h6v12H4z" stroke="#444" strokeDasharray="2 1" /><circle cx="8" cy="9" r="5" stroke="#d31f1f" strokeWidth="1.4" /><path d="M4 5l8 8" stroke="#d31f1f" strokeWidth="1.4" /></Ico></Sq>
          <Sq on><Ico w={16} h={21} vb="0 0 16 21"><path d="M8 1a6 6 0 0 0-3 11v3h6v-3A6 6 0 0 0 8 1z" fill="#f4f4f4" stroke="#ddd" /><rect x="5" y="16" width="6" height="3" fill="#bbb" /></Ico></Sq>
          <Sq><Ico w={17} h={19} vb="0 0 17 19"><rect x="1" y="1" width="15" height="17" fill="#eee" stroke="#c6c6c6" /><path d="M5 5h8v8H5z" fill="#ccc" /></Ico></Sq>
          <Sq on><div className="text-[18px] leading-[18px] text-[#1177d8] border-b-[4px] border-[#c98a2e] font-semibold">A</div></Sq>
          <Sq><Ico w={18} h={18} vb="0 0 18 18"><rect x="2" y="4" width="13" height="11" fill="#eee" stroke="#aaa" /><path d="M13 1L5 17" stroke="#aaa" /></Ico></Sq>
          <Sq><Ico w={18} h={20} vb="0 0 18 20"><path d="M3 9V5a3 3 0 0 1 6 0" stroke="#999" strokeWidth="1.3" /><rect x="6" y="9" width="11" height="10" fill="#f0f0f0" stroke="#aaa" /></Ico></Sq>
          <div className="ml-[4px] w-[102px] whitespace-nowrap tracking-[.5px]">参照のネスト(<span className="underline">N</span>):</div>
          <Sel className="ml-[4px] w-[181px]">ネストなし(N)</Sel>
          <div className="ml-[9px] w-[115px] text-[#a0a0a0] whitespace-nowrap tracking-[.5px]">ネストの奥行き(P):</div>
          <Field dis className="ml-[2px] w-[50px]">1</Field>
          <div className="ml-[9px] w-[90px] text-[#a0a0a0] whitespace-nowrap">表示の優先(D):</div>
          <Sel dis className="ml-[4px] w-[120px]">許可(L)</Sel>
        </div>
        <div className="flex items-center h-[23px] mt-[5px] pl-[3px]">
          <div className="w-[136px] whitespace-nowrap">新しい画層の表示(<span className="underline">W</span>):</div>
          <Sel className="w-[119px]">変数を構成(C)</Sel>
          <div className="ml-[10px] w-[128px] text-[#a0a0a0] whitespace-nowrap tracking-[.4px]">ジオリファレンス(G):</div>
          <Sel dis className="ml-[3px] w-[85px]">いいえ</Sel>
        </div>
      </div>
    </div>
  );
}

function Swatch({ children }: { children?: React.ReactNode }) {
  return <div className="w-[21px] h-[13px] border border-[#333] bg-white shrink-0 flex items-center justify-center overflow-hidden">{children}</div>;
}

function PR({ label, value, sw, hl }: { label?: React.ReactNode; value: React.ReactNode; sw?: React.ReactNode; hl?: boolean }) {
  return (
    <div className="flex items-center h-[15px] whitespace-nowrap leading-[15px]">
      <div className="w-[22px] h-full bg-[#f6f9fd] shrink-0" />
      <div className={"w-[59px] h-full text-[#777] shrink-0 " + (hl ? "bg-[#f0f4fa]" : "")}>{label}</div>
      <div className="flex items-center gap-[7px] text-[#666] pl-[1px]">
        {sw}
        {value}
      </div>
    </div>
  );
}

function Section({ title, children, last, gap = "mb-[4px]" }: { title?: string; children?: React.ReactNode; last?: boolean; gap?: string }) {
  return (
    <div className={last ? "" : gap}>
      <div className={"flex items-center justify-between bg-[#c4dcf7] rounded-t-[4px] pl-[27px] pr-[8px] font-bold text-[13px] text-[#222] " + (last ? "h-[22px]" : "h-[25px]")}>
        <span>{title}</span>
        <Chev />
      </div>
      {!last && (
        <div className="px-[5px] pt-[2px] pb-[3px] bg-[#e6f0fb] rounded-b-[4px]">
          <div className="border border-[#9a9a9a] bg-white text-[12px]">{children}</div>
        </div>
      )}
    </div>
  );
}

function PropPanel() {
  return (
    <div className="w-[247px] shrink-0 flex flex-col border-l-[6px] border-[#a7b0b9] bg-[#dcdcdc]">
      <div className="flex items-center h-[21px] pb-[3px] bg-[#c0c0c0] pl-[2px] pr-[4px] text-[13px] text-[#222]">
        <span>プロパティ</span>
        <div className="ml-auto flex items-center gap-[8px]">
          <Caret c="#111" />
          <Ico w={9} h={12} vb="0 0 9 12"><path d="M2 1h5v6H2zM1 7h7M4.5 7v5" stroke="#333" /></Ico>
          <Ico w={12} h={12} vb="0 0 12 12"><path d="M1 1l10 10M11 1L1 11" stroke="#111" strokeWidth="1.5" /></Ico>
        </div>
      </div>
      <div className="h-[151px] mx-0 mr-[2px] bg-white border border-[#8c8c8c] text-[13px]">
        <div className="flex items-center h-[26px] mt-[1px]">
          <div className="w-[21px] flex justify-end pr-[4px]">
            <svg width="7" height="7" viewBox="0 0 7 7"><path d="M7 0v7H0z" fill="#222" /></svg>
          </div>
          <div className="flex-1 mr-[5px] h-full bg-[#cdd0de] flex items-center pl-[4px] gap-[7px] text-[#555]">
            <Ico w={14} h={14}><path d="M1 8l6-6M3 12l6-6" stroke="#666" strokeWidth="1.2" /><circle cx="11" cy="11" r="2.5" stroke="#666" strokeWidth="1.2" /></Ico>
            要素 (1)
          </div>
        </div>
        <div className="pl-[54px] mt-[2px] text-[#333]">テキスト: area1</div>
      </div>
      <div className="mt-[4px] mr-[2px] h-[453px] bg-white border border-[#b0b0b0] flex">
        <div className="w-[212px] pl-[5px] pt-[3px] shrink-0 bg-white">
          <div className="w-[211px]">
            <Section>
              <PR value={<span className="tracking-[1px]">テキスト : area1</span>} />
              <PR value="Default" />
              <PR sw={<Swatch />} value="0" />
              <PR sw={<Swatch><Line s={18} d="M0 3h16M0 6h16M0 9h16M0 12h16" c="#333" sw={1.2} /></Swatch>} value={<span className="tracking-[.4px]">ByLevel (0)</span>} />
              <PR value="本図" />
              <PR value="(なし)" />
              <PR value="0" />
              <PR value="0" />
            </Section>
            <Section gap="mb-[3px]">
              <PR label="内容" value="area1" />
              <PR label={<span className="tracking-[-1.4px]">文字スタイル</span>} sw={<Swatch />} value="(なし)" />
            </Section>
            <Section title="書式設定">
              <PR label="文字の色" sw={<Swatch />} value="0" />
              <PR label="フォント名" sw={<Swatch><span className="text-[11px] font-bold leading-none text-[#222] [font-family:'Liberation_Serif',serif]">T</span></Swatch>} value="Arial" />
              <PR label="垂直" value="False" />
              <PR label="高さ" value="0.250m" />
              <PR label="幅" value="0.250m" />
              <PR label="注釈" value="True" hl />
              <PR label="配置基準" value="左上" />
              <PR label="斜体" value="False" />
              <PR label="傾斜角度" value="0.000°" />
              <PR label="行間隔" value="0.0000" />
              <PR label="行間隔タイ" value="正確" />
            </Section>
            <Section title="図形" last />
          </div>
        </div>
        <div className="flex-1 flex flex-col items-center pt-[8px] pl-[2px]">
          <Ico w={11} h={7} vb="0 0 11 7"><path d="M1 6l4.5-5L10 6" stroke="#444" strokeWidth="1.2" /></Ico>
          <div className="mt-[6px] w-[16px] h-[230px] bg-[#c6c6c6]" />
          <div className="mt-auto mb-[9px]">
            <Ico w={11} h={7} vb="0 0 11 7"><path d="M1 1l4.5 5L10 1" stroke="#444" strokeWidth="1.2" /></Ico>
          </div>
        </div>
      </div>
    </div>
  );
}

function BottomToolbar() {
  const nums = ["1", "2", "3", "4", "5", "6", "7", "8"];
  return (
    <div className="flex h-[35px] bg-[#dcdcdc]">
      <div className="w-[540px] shrink-0 bg-[#f0f0f0] flex items-center pt-[2px]">
        <div className="ml-[8px] w-[28px] h-[28px] rounded-full bg-[#cfcfcf] border border-[#aaa] flex items-center justify-center">
          <Ico><path d="M2 8l6-6v3h6v6H8v3z" fill="#f3f3f3" /></Ico>
        </div>
        <div className="ml-[5px]"><Caret c="#888" /></div>
        <div className="ml-[7px] w-[28px] h-[28px] rounded-full bg-gradient-to-b from-[#8bd04a] to-[#4ea324] border border-[#3f8a1c] flex items-center justify-center">
          <Ico><path d="M14 8L8 2v3H2v6h6v3z" fill="#fff" /></Ico>
        </div>
        <div className="ml-[5px]"><Caret c="#111" /></div>
        <div className="ml-[5px]">
          <Ico w={28} h={24} vb="0 0 28 24"><ellipse cx="14" cy="15" rx="13" ry="7" fill="#a9b0b5" stroke="#777" /><ellipse cx="14" cy="12" rx="13" ry="6" fill="#c6cbcf" stroke="#8c8c8c" /><path d="M5 1l8 11" stroke="#777" strokeWidth="3" /></Ico>
        </div>
        <div className="ml-[5px]"><Caret c="#111" /></div>
        <div className="ml-[4px] w-[192px] h-[26px] bg-[#e6e6e6] border border-[#b4b4b4] flex items-center justify-between text-[13px] pl-[2px] pr-[8px]">
          <div className="flex items-center gap-[4px]"><Win2 s={21} />3D Metric Design</div>
          <Caret c="#111" />
        </div>
        <div className="ml-[6px]"><Win2 s={27} /></div>
        <div className="ml-[3px] w-px h-[26px] bg-[#c2c2c2]" />
        <div className="ml-[4px] flex h-[26px]">
          {nums.map((n) => (
            <div key={n} className={"w-[20px] flex items-center justify-center text-[13px] border-r border-[#666] " + (n === "1" ? "bg-[#7cb0e6] border border-[#4a86c8]" : "bg-[#f4f4f4]")}>
              {n}
            </div>
          ))}
        </div>
      </div>
      <div className="w-[6px] bg-[#f0f0f0] flex flex-col justify-center gap-[2px] items-center border-l border-[#d5d5d5]">
        <div className="h-[24px] border-l border-dotted border-[#999]" />
      </div>
      <div className="w-[307px] shrink-0 bg-[#f0f0f0] flex items-center pl-[4px] pt-[2px]">
        <div className="w-[31px] h-[30px] bg-[#7cb0e6] border border-[#4a86c8] flex items-center justify-center shrink-0">
          <Ico w={24} h={24} vb="0 0 24 24"><path d="M3 2l18 20M21 2L3 22" stroke="#f4dc6e" strokeWidth="5" /></Ico>
        </div>
        <div className="w-[5px]" />
        <div className="flex w-[29px] justify-center"><Line s={24} d="M1 14l4-4h4l2 1 4-1c1-2 0-6 0-8" c="#333" sw={1} /></div>
        <div className="w-[30px] h-[30px] bg-[#6f9bc9] border border-[#3e6fa0] flex items-center justify-center bg-[radial-gradient(#33598a_1px,transparent_1px)] bg-[length:4px_4px] shrink-0"><PathIcon s={26} /></div>
        <div className="flex w-[31px] justify-center"><PathIcon s={24} /></div>
        <div className="flex w-[29px] justify-center">
          <Ico w={24} h={24} vb="0 0 24 24"><circle cx="12" cy="12" r="11" stroke="#444" /><circle cx="12" cy="12" r="2.5" stroke={BL} /></Ico>
        </div>
        <div className="flex w-[29px] justify-center">
          <Ico w={25} h={25} vb="0 0 25 25"><path d="M12.5 0v25M0 12.5h25M3 3l19 19M22 3L3 22" stroke="#444" strokeDasharray="3 12" /><circle cx="12.5" cy="12.5" r="7" stroke="#444" /><circle cx="12.5" cy="12.5" r="4" fill={BL} /><circle cx="12.5" cy="12.5" r="1.6" fill="#fff" /></Ico>
        </div>
        <div className="flex w-[30px] justify-center">
          <Ico w={22} h={24} vb="0 0 22 24"><path d="M2 13c2-5 5-5 6-3s-2 4 0 5 8-5 8-13" stroke="#444" /><circle cx="2" cy="14" r="1.6" fill="#fff" stroke={BL} /><circle cx="9" cy="12" r="1.6" fill="#fff" stroke={BL} /></Ico>
        </div>
        <div className="flex w-[29px] justify-center">
          <Ico w={24} h={24} vb="0 0 24 24"><path d="M2 2l20 20M22 2L2 22" stroke="#444" /><circle cx="12" cy="12" r="2.5" fill="#fff" stroke={BL} /></Ico>
        </div>
        <div className="flex w-[30px] justify-center">
          <Ico w={24} h={20} vb="0 0 24 20"><path d="M1 18C3 9 7 7 12 7s9 2 11 11" stroke="#555" /><path d="M0 7h24" stroke="#666" /></Ico>
        </div>
        <div className="flex w-[29px] justify-center">
          <Ico w={26} h={26} vb="0 0 26 26"><path d="M1 24h22M21 1v23M14 24v-6h7" stroke="#666" /></Ico>
        </div>
      </div>
      <div className="w-[5px] bg-[#f0f0f0]" />
      <div className="w-[31px] shrink-0 bg-[#f0f0f0] border-l border-[#c2c2c2] flex items-center justify-center pt-[2px]">
        <Ico w={26} h={32} vb="0 0 26 32"><rect x="3" y="3" width="20" height="26" stroke="#333" /><circle cx="3" cy="3" r="2.5" fill="#fff" stroke="#1a80e0" strokeWidth="1.4" /><circle cx="23" cy="3" r="2.5" fill="#fff" stroke="#1a80e0" strokeWidth="1.4" /><circle cx="3" cy="29" r="2.5" fill="#fff" stroke="#1a80e0" strokeWidth="1.4" /><circle cx="23" cy="29" r="2.5" fill="#fff" stroke="#1a80e0" strokeWidth="1.4" /><circle cx="13" cy="16" r="2.5" stroke="#1a80e0" strokeWidth="1.4" /></Ico>
      </div>
      <div className="w-[8px]" />
      <div className="w-[216px] shrink-0 bg-[#f0f0f0] flex items-center pl-[4px] pt-[2px]">
        <div className="w-[26px] flex justify-center shrink-0"><Line s={20} d="M5 1v14M11 1v14M1 5h14M1 11h14" sw={1.4} /></div>
        <div className="w-[30px] h-[32px] bg-[#7cb0e6] border border-[#4a86c8] flex items-center justify-center shrink-0">
          <Ico w={26} h={30} vb="0 0 26 30"><path d="M3 2v22M23 2v22M6 4h14M6 4l3-2M6 4l3 2M20 4l-3-2M20 4l-3 2" stroke="#1177d8" strokeWidth="1.3" /><path d="M3 26h20" stroke="#111" strokeDasharray="2 2" /><circle cx="3" cy="26" r="3" fill="#1177d8" /><circle cx="23" cy="26" r="3" fill="#1177d8" /></Ico>
        </div>
        <div className="w-[29px] flex justify-center shrink-0">
          <Ico w={24} h={26} vb="0 0 24 26"><path d="M2 8l10-6 10 5-10 6zM2 12l10 6 10-6M2 17l10 6 10-6" fill="#f4f4f4" stroke="#777" /></Ico>
        </div>
        <div className="w-[31px] flex justify-center shrink-0">
          <Ico w={26} h={20} vb="0 0 26 20"><ellipse cx="6" cy="10" rx="5" ry="8" stroke={BL} /><ellipse cx="13" cy="10" rx="5" ry="8" stroke={BL} /><ellipse cx="19" cy="10" rx="6" ry="8" fill="#e3f2fd" stroke={BL} /></Ico>
        </div>
        <div className="w-[30px] h-[32px] bg-[#7cb0e6] border border-[#4a86c8] flex flex-col items-center justify-center shrink-0">
          <div className="text-[22px] leading-[22px] text-[#1177d8] font-semibold">A</div>
          <div className="w-[24px] h-[5px] bg-[#c98a2e]" />
        </div>
        <div className="w-[30px] flex justify-center shrink-0">
          <Ico w={24} h={26} vb="0 0 24 26"><rect x="6" y="1" width="17" height="14" stroke="#aaa" /><path d="M14 1v14M6 8h17" stroke="#aaa" /><path d="M5 17V6M2 9l3-4 3 4" stroke="#2c9a3a" strokeWidth="1.4" /><path d="M6 21h11v-3l5 4-5 4v-3H6z" fill="#f0b9a0" stroke="#b5533a" strokeWidth=".8" /></Ico>
        </div>
        <div className="w-[29px] flex justify-center shrink-0">
          <Ico w={28} h={24} vb="0 0 28 24"><path d="M2 12L14 1l12 11-12 11z" fill="#f4f4f4" stroke="#aaa" /><circle cx="14" cy="9" r="2.5" stroke={BL} /><path d="M10 12l-6 4M18 12l6 4" stroke="#888" strokeWidth="2" /></Ico>
        </div>
      </div>
    </div>
  );
}

function St({ className, children }: { className: string; children?: React.ReactNode }) {
  return <div className={"flex items-center h-[33px] border-l border-[#8a8a8a] shrink-0 whitespace-nowrap " + className}>{children}</div>;
}

function StatusBar() {
  return (
    <div className="flex items-center h-[39px] pt-[2px] bg-[#f0f0f0] border-b-2 border-[#555] text-[13px] text-[#333]">
      <div className="w-[371px] shrink-0 pl-[2px] whitespace-nowrap">長方形の枠を配置 &gt; 第1点を入力</div>
      <div className="w-[6px] h-[33px] border-l border-dotted border-[#999] shrink-0" />
      <div className="w-[39px] shrink-0 flex justify-center"><InfoBubble s={22} /></div>
      <St className="w-[62px] pl-[2px]">テキスト</St>
      <St className="w-[37px] justify-center"><PathIcon s={28} /></St>
      <St className="w-[39px] justify-center"><Lock s={18} /></St>
      <St className="w-[167px] pl-[3px]">Default</St>
      <St className="w-[148px] pl-[14px] gap-[14px]"><Cursor w={13} h={18} /><span>: 1</span></St>
      <St className="w-[148px]" />
      <St className="w-[245px] pl-[3px] tracking-[.35px]">13.592, -14.786, 0.000</St>
      <St className="w-[38px]" />
      <St className="w-[39px]" />
      <St className="w-[38px]" />
      <St className="w-[38px] justify-center">
        <Ico w={22} h={28} vb="0 0 22 28"><path d="M5 3h14v20a3 3 0 0 1-3 3H3a3 3 0 0 0 2-3zM5 3a3 3 0 0 0-3 3h3" stroke="#c2c2c2" fill="#f5f5f5" /></Ico>
      </St>
      <St className="w-[38px] justify-center">
        <Ico w={22} h={28} vb="0 0 22 28"><path d="M17 2l-5 7-4 6 6 3 3-7 4-5-3 1z" fill="#7c7c7c" /><circle cx="8" cy="21" r="5" fill="#9c9c9c" /><circle cx="8" cy="21" r="2" fill="#f0f0f0" /></Ico>
      </St>
      <St className="w-[39px]" />
      <St className="w-[38px] justify-center">
        <Ico w={20} h={26} vb="0 0 20 26"><path d="M3 1h10v20H3z" fill="#1a6fd0" stroke="#1a6fd0" strokeDasharray="2 1" /><circle cx="13" cy="19" r="5" fill="#fff" stroke="#d31f1f" strokeWidth="1.8" /><path d="M10 16l6 6" stroke="#d31f1f" strokeWidth="1.8" /></Ico>
      </St>
      <St className="w-[38px]" />
      <St className="flex-1 justify-center">
        <Ico w={16} h={20} vb="0 0 16 20"><path d="M1 2h14v12l-7 5-7-5z" fill="#f5f5f5" stroke="#c2c2c2" /><path d="M4 5h8v7H4z" fill="#e3e3e3" /></Ico>
      </St>
    </div>
  );
}

function PlaceFrameDialog() {
  const rows = ["a", "b", "area1", "area3"];
  return (
    <div className="absolute left-[1075px] top-[198px] w-[373px] h-[346px] bg-[#f0f0f0] border border-[#777] shadow-[2px_3px_8px_rgba(0,0,0,0.35)] text-[13px] text-[#333]">
      <div className="flex items-center h-[31px] bg-white pl-[7px] text-[13px]">
        <Ico w={17} h={17}><path d="M13 1l-4 4-1 4-5 4 2 2 5-3 3-1 3-5-3 1-1-2 2-3z" fill="#999" /><circle cx="6" cy="12" r="3" fill="#bbb" stroke="#777" /></Ico>
        <span className="ml-[4px] text-[#444]">枠を配置</span>
        <div className="ml-[163px] w-[12px] h-px bg-[#444]" />
        <div className="ml-[36px] w-[11px] h-[11px] border border-[#cfcfcf]" />
        <div className="ml-[37px]">
          <Ico w={12} h={12} vb="0 0 12 12"><path d="M1 1l10 10M11 1L1 11" stroke="#444" /></Ico>
        </div>
      </div>
      <div className="flex items-center mt-[14px] h-[23px]">
        <div className="w-[109px] text-right whitespace-nowrap tracking-[1px]">枠タイプ(<span className="underline">T</span>):</div>
        <Sel className="ml-[12px] w-[143px]">長方形(B)</Sel>
      </div>
      <div className="flex items-center mt-[4px] h-[23px]">
        <div className="w-[109px] text-right whitespace-nowrap">枠のモード(<span className="underline">M</span>):</div>
        <Sel className="ml-[12px] w-[143px]">内側(I)</Sel>
      </div>
      <div className="flex items-center mt-[21px] ml-[5px] h-[3px]">
        <div className="w-[336px] h-px bg-[#bdbdbd]" />
        <div className="ml-[7px]">
          <svg width="9" height="6" viewBox="0 0 9 6"><path d="M0 6h9L4.5 0z" fill="#111" /></svg>
        </div>
      </div>
      <div className="flex items-center mt-[22px] ml-[15px] w-[97px] h-[35px] bg-[#f5f5f5] border border-[#e8e8e8]">
        <div className="w-[30px] flex justify-center"><Folder w={24} h={21} /></div>
        <div className="w-[34px] flex justify-center"><Save c="#8a8a8a" s={23} /></div>
        <div className="flex justify-center">
          <Ico w={26} h={25} vb="0 0 26 25">
            <path d="M1 7l14-6 9 5-10 6z" fill="#a6d9f4" stroke="#6fb7e3" />
            <path d="M1 7l6 9 7-4" fill="#d5eefa" stroke="#6fb7e3" />
            <path d="M24 10L12 21l-3 3 1-4 12-12z" fill="#f3a72c" stroke="#8a5a12" strokeWidth=".7" />
          </Ico>
        </div>
      </div>
      <div className="mt-[16px] ml-[15px] w-[345px] h-[141px] bg-white border border-[#999]">
        <div className="flex h-[29px] text-[13px]">
          <div className="w-[114px] pl-[6px] border-r border-[#eee]">名前</div>
          <div className="w-[187px] pl-[4px] border-r border-[#eee]">説明</div>
          <div className="flex-1 flex justify-center pt-[3px]">
            <ViewWin />
          </div>
        </div>
        {rows.map((r) => (
          <div key={r} className={"flex items-center justify-between h-[21.5px] pr-[10px] " + (r === "area1" ? "bg-gradient-to-b from-[#e9f5fd] to-[#cfe8f9]" : "")}>
            {r}
            <div className="w-[16px] h-[16px] border border-[#444] bg-gradient-to-br from-[#dedede] to-white to-40%" />
          </div>
        ))}
      </div>
      <div className="absolute left-[14px] top-[135px] w-[31px] h-[41px] border-2 border-[#f04545] shadow-[1px_2px_3px_rgba(0,0,0,0.3)]" />
      <div className="absolute left-[6px] top-[262px] w-[353px] h-[27px] border-2 border-[#f04545] shadow-[1px_2px_3px_rgba(0,0,0,0.3)]" />
    </div>
  );
}

export default function App() {
  return (
    <div className="relative w-[1599px] h-[859px] overflow-hidden border-l border-[#2f9bdc] bg-[#f0f0f0] text-[12px] text-[#333] [font-family:'Noto_Sans','Noto_Sans_CJK_JP',sans-serif] [font-feature-settings:'palt']">
      <TitleBar />
      <TabBar />
      <Ribbon />
      <div className="flex h-[630px]">
        <div className="w-[1351px] shrink-0 flex flex-col">
          <ViewWindow />
          <RefDialogPanel />
        </div>
        <PropPanel />
      </div>
      <BottomToolbar />
      <StatusBar />
      <PlaceFrameDialog />
    </div>
  );
}
